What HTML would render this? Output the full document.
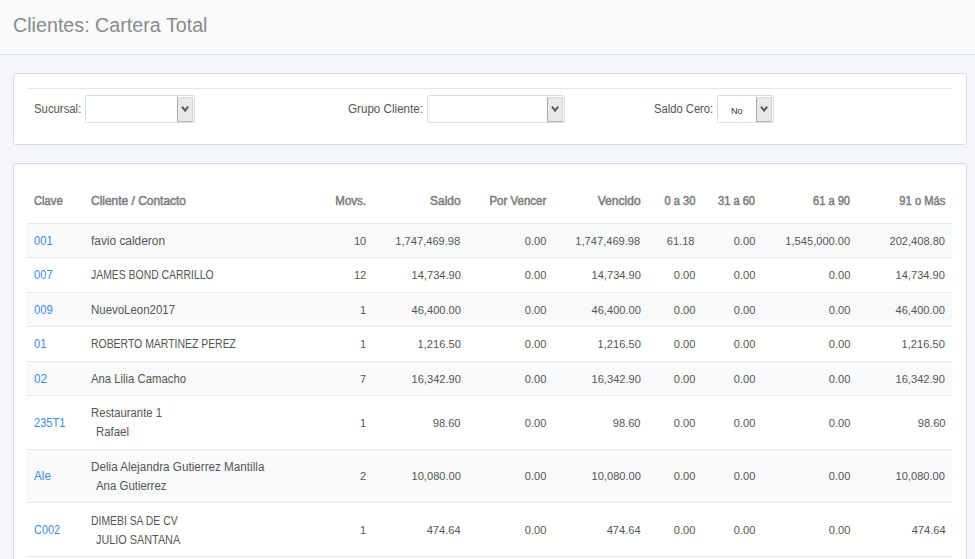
<!DOCTYPE html>
<html><head><meta charset="utf-8"><style>
html,body{margin:0;padding:0;}
body{width:975px;height:559px;overflow:hidden;position:relative;background:#f4f6f9;font-family:'Liberation Sans', sans-serif;}
.t{position:absolute;white-space:pre;}
.panel{position:absolute;background:#fff;border:1px solid #d3dde5;border-radius:3px;}
.sel{position:absolute;background:#fff;border:1px solid #d6e0e4;border-radius:2px;}
.btn{position:absolute;background:#e9e9e9;border-left:1px solid #a9a9a9;border-bottom:1px solid #b5b5b5;border-top:1px solid #dcdcdc;border-right:1px solid #d0d0d0;}
</style></head><body>
<div style="position:absolute;left:0;top:0;width:975px;height:54px;background:#f9fafc"></div>
<div style="position:absolute;left:0;top:54px;width:975px;height:1px;background:#d5dee6"></div>
<div class="panel" style="left:13px;top:73px;width:952px;height:70px"></div>
<div style="position:absolute;left:27px;top:88px;width:925px;height:1px;background:#e6e6e6"></div>
<div class="sel" style="left:85px;top:95px;width:108px;height:26px"></div><div class="btn" style="left:177px;top:97px;width:14px;height:23px"></div><svg style="position:absolute;left:179px;top:104px" width="12" height="10" viewBox="0 0 12 10"><path d="M3 2.7 L6.1 6.6 L9.2 2.7" fill="none" stroke="#585858" stroke-width="2"/></svg>
<div class="sel" style="left:427px;top:95px;width:136px;height:26px"></div><div class="btn" style="left:547px;top:97px;width:14px;height:23px"></div><svg style="position:absolute;left:549px;top:104px" width="12" height="10" viewBox="0 0 12 10"><path d="M3 2.7 L6.1 6.6 L9.2 2.7" fill="none" stroke="#585858" stroke-width="2"/></svg>
<div class="sel" style="left:717px;top:95px;width:55px;height:26px"></div><div class="btn" style="left:756px;top:97px;width:14px;height:23px"></div><svg style="position:absolute;left:758px;top:104px" width="12" height="10" viewBox="0 0 12 10"><path d="M3 2.7 L6.1 6.6 L9.2 2.7" fill="none" stroke="#585858" stroke-width="2"/></svg>
<div class="panel" style="left:13px;top:163px;width:952px;height:420px"></div>
<div style="position:absolute;left:27px;top:223px;width:925px;height:1px;background:#e8e8e8"></div>
<div style="position:absolute;left:27px;top:224px;width:925px;height:33px;background:#f9fafb"></div>
<div style="position:absolute;left:27px;top:257px;width:925px;height:1px;background:#e8e8e8"></div>
<div style="position:absolute;left:27px;top:292px;width:925px;height:1px;background:#e8e8e8"></div>
<div style="position:absolute;left:27px;top:293px;width:925px;height:33px;background:#f9fafb"></div>
<div style="position:absolute;left:27px;top:326px;width:925px;height:1px;background:#e8e8e8"></div>
<div style="position:absolute;left:27px;top:361px;width:925px;height:1px;background:#e8e8e8"></div>
<div style="position:absolute;left:27px;top:362px;width:925px;height:33px;background:#f9fafb"></div>
<div style="position:absolute;left:27px;top:395px;width:925px;height:1px;background:#e8e8e8"></div>
<div style="position:absolute;left:27px;top:449px;width:925px;height:1px;background:#e8e8e8"></div>
<div style="position:absolute;left:27px;top:450px;width:925px;height:52px;background:#f9fafb"></div>
<div style="position:absolute;left:27px;top:502px;width:925px;height:1px;background:#e8e8e8"></div>
<div style="position:absolute;left:27px;top:556px;width:925px;height:1px;background:#e8e8e8"></div>
<div class="t" style="left:13.00px;top:13.07px;font-size:20px;line-height:24px;font-weight:400;color:#8a8a8a;transform:scaleX(0.9848);transform-origin:left">Clientes: Cartera Total</div>
<div class="t" style="left:34.00px;top:101.04px;font-size:12px;line-height:16px;font-weight:400;color:#555;transform:scaleX(0.9454);transform-origin:left">Sucursal:</div>
<div class="t" style="left:348.20px;top:101.04px;font-size:12px;line-height:16px;font-weight:400;color:#555;transform:scaleX(0.9693);transform-origin:left">Grupo Cliente:</div>
<div class="t" style="left:654.30px;top:101.04px;font-size:12px;line-height:16px;font-weight:400;color:#555;transform:scaleX(0.9341);transform-origin:left">Saldo Cero:</div>
<div class="t" style="left:730.50px;top:104.16px;font-size:9.5px;line-height:13.5px;font-weight:400;color:#333;transform:scaleX(0.9625);transform-origin:left">No</div>
<div class="t" style="left:34.40px;top:192.84px;font-size:12px;line-height:16px;font-weight:400;color:#7d7d7d;-webkit-text-stroke:0.50px #7d7d7d;transform:scaleX(0.9352);transform-origin:left">Clave</div>
<div class="t" style="left:90.90px;top:192.84px;font-size:12px;line-height:16px;font-weight:400;color:#7d7d7d;-webkit-text-stroke:0.50px #7d7d7d;transform:scaleX(0.9959);transform-origin:left">Cliente / Contacto</div>
<div class="t" style="left:333.78px;top:192.84px;font-size:12px;line-height:16px;font-weight:400;color:#7d7d7d;-webkit-text-stroke:0.50px #7d7d7d;transform:scaleX(0.9589);transform-origin:right">Movs.</div>
<div class="t" style="left:429.80px;top:192.84px;font-size:12px;line-height:16px;font-weight:400;color:#7d7d7d;-webkit-text-stroke:0.50px #7d7d7d;transform:scaleX(0.9999);transform-origin:right">Saldo</div>
<div class="t" style="left:486.62px;top:192.84px;font-size:12px;line-height:16px;font-weight:400;color:#7d7d7d;-webkit-text-stroke:0.50px #7d7d7d;transform:scaleX(0.9600);transform-origin:right">Por Vencer</div>
<div class="t" style="left:597.80px;top:192.84px;font-size:12px;line-height:16px;font-weight:400;color:#7d7d7d;-webkit-text-stroke:0.50px #7d7d7d;transform:scaleX(1.0070);transform-origin:right">Vencido</div>
<div class="t" style="left:661.62px;top:192.84px;font-size:12px;line-height:16px;font-weight:400;color:#7d7d7d;-webkit-text-stroke:0.50px #7d7d7d;transform:scaleX(0.9288);transform-origin:right">0 a 30</div>
<div class="t" style="left:715.45px;top:192.84px;font-size:12px;line-height:16px;font-weight:400;color:#7d7d7d;-webkit-text-stroke:0.50px #7d7d7d;transform:scaleX(0.9239);transform-origin:right">31 a 60</div>
<div class="t" style="left:810.45px;top:192.84px;font-size:12px;line-height:16px;font-weight:400;color:#7d7d7d;-webkit-text-stroke:0.50px #7d7d7d;transform:scaleX(0.9239);transform-origin:right">61 a 90</div>
<div class="t" style="left:895.94px;top:192.84px;font-size:12px;line-height:16px;font-weight:400;color:#7d7d7d;-webkit-text-stroke:0.50px #7d7d7d;transform:scaleX(0.9319);transform-origin:right">91 o Más</div>
<div class="t" style="left:34.20px;top:232.74px;font-size:12px;line-height:16px;font-weight:400;color:#3d8be2;transform:scaleX(0.9285);transform-origin:left">001</div>
<div class="t" style="left:91.00px;top:232.74px;font-size:12px;line-height:16px;font-weight:400;color:#555;transform:scaleX(0.9904);transform-origin:left">favio calderon</div>
<div class="t" style="left:353.55px;top:233.59px;font-size:11px;line-height:15px;font-weight:400;color:#555;transform:scaleX(1.0100);transform-origin:right">10</div>
<div class="t" style="left:396.27px;top:233.59px;font-size:11px;line-height:15px;font-weight:400;color:#555;transform:scaleX(1.0100);transform-origin:right">1,747,469.98</div>
<div class="t" style="left:524.58px;top:233.59px;font-size:11px;line-height:15px;font-weight:400;color:#555;transform:scaleX(1.0100);transform-origin:right">0.00</div>
<div class="t" style="left:576.27px;top:233.59px;font-size:11px;line-height:15px;font-weight:400;color:#555;transform:scaleX(1.0100);transform-origin:right">1,747,469.98</div>
<div class="t" style="left:667.47px;top:233.59px;font-size:11px;line-height:15px;font-weight:400;color:#555;transform:scaleX(1.0100);transform-origin:right">61.18</div>
<div class="t" style="left:734.08px;top:233.59px;font-size:11px;line-height:15px;font-weight:400;color:#555;transform:scaleX(1.0100);transform-origin:right">0.00</div>
<div class="t" style="left:786.27px;top:233.59px;font-size:11px;line-height:15px;font-weight:400;color:#555;transform:scaleX(1.0100);transform-origin:right">1,545,000.00</div>
<div class="t" style="left:890.24px;top:233.59px;font-size:11px;line-height:15px;font-weight:400;color:#555;transform:scaleX(1.0100);transform-origin:right">202,408.80</div>
<div class="t" style="left:34.20px;top:267.24px;font-size:12px;line-height:16px;font-weight:400;color:#3d8be2;transform:scaleX(0.9285);transform-origin:left">007</div>
<div class="t" style="left:91.00px;top:267.24px;font-size:12px;line-height:16px;font-weight:400;color:#555;transform:scaleX(0.8679);transform-origin:left">JAMES BOND CARRILLO</div>
<div class="t" style="left:353.55px;top:268.09px;font-size:11px;line-height:15px;font-weight:400;color:#555;transform:scaleX(1.0100);transform-origin:right">12</div>
<div class="t" style="left:411.56px;top:268.09px;font-size:11px;line-height:15px;font-weight:400;color:#555;transform:scaleX(1.0100);transform-origin:right">14,734.90</div>
<div class="t" style="left:524.58px;top:268.09px;font-size:11px;line-height:15px;font-weight:400;color:#555;transform:scaleX(1.0100);transform-origin:right">0.00</div>
<div class="t" style="left:591.56px;top:268.09px;font-size:11px;line-height:15px;font-weight:400;color:#555;transform:scaleX(1.0100);transform-origin:right">14,734.90</div>
<div class="t" style="left:673.58px;top:268.09px;font-size:11px;line-height:15px;font-weight:400;color:#555;transform:scaleX(1.0100);transform-origin:right">0.00</div>
<div class="t" style="left:734.08px;top:268.09px;font-size:11px;line-height:15px;font-weight:400;color:#555;transform:scaleX(1.0100);transform-origin:right">0.00</div>
<div class="t" style="left:829.08px;top:268.09px;font-size:11px;line-height:15px;font-weight:400;color:#555;transform:scaleX(1.0100);transform-origin:right">0.00</div>
<div class="t" style="left:896.36px;top:268.09px;font-size:11px;line-height:15px;font-weight:400;color:#555;transform:scaleX(1.0100);transform-origin:right">14,734.90</div>
<div class="t" style="left:34.20px;top:301.74px;font-size:12px;line-height:16px;font-weight:400;color:#3d8be2;transform:scaleX(0.9435);transform-origin:left">009</div>
<div class="t" style="left:91.00px;top:301.74px;font-size:12px;line-height:16px;font-weight:400;color:#555;transform:scaleX(0.9537);transform-origin:left">NuevoLeon2017</div>
<div class="t" style="left:359.68px;top:302.59px;font-size:11px;line-height:15px;font-weight:400;color:#555;transform:scaleX(1.0100);transform-origin:right">1</div>
<div class="t" style="left:411.56px;top:302.59px;font-size:11px;line-height:15px;font-weight:400;color:#555;transform:scaleX(1.0100);transform-origin:right">46,400.00</div>
<div class="t" style="left:524.58px;top:302.59px;font-size:11px;line-height:15px;font-weight:400;color:#555;transform:scaleX(1.0100);transform-origin:right">0.00</div>
<div class="t" style="left:591.56px;top:302.59px;font-size:11px;line-height:15px;font-weight:400;color:#555;transform:scaleX(1.0100);transform-origin:right">46,400.00</div>
<div class="t" style="left:673.58px;top:302.59px;font-size:11px;line-height:15px;font-weight:400;color:#555;transform:scaleX(1.0100);transform-origin:right">0.00</div>
<div class="t" style="left:734.08px;top:302.59px;font-size:11px;line-height:15px;font-weight:400;color:#555;transform:scaleX(1.0100);transform-origin:right">0.00</div>
<div class="t" style="left:829.08px;top:302.59px;font-size:11px;line-height:15px;font-weight:400;color:#555;transform:scaleX(1.0100);transform-origin:right">0.00</div>
<div class="t" style="left:896.36px;top:302.59px;font-size:11px;line-height:15px;font-weight:400;color:#555;transform:scaleX(1.0100);transform-origin:right">46,400.00</div>
<div class="t" style="left:34.20px;top:336.24px;font-size:12px;line-height:16px;font-weight:400;color:#3d8be2;transform:scaleX(0.9432);transform-origin:left">01</div>
<div class="t" style="left:91.00px;top:336.24px;font-size:12px;line-height:16px;font-weight:400;color:#555;transform:scaleX(0.8698);transform-origin:left">ROBERTO MARTINEZ PEREZ</div>
<div class="t" style="left:359.68px;top:337.09px;font-size:11px;line-height:15px;font-weight:400;color:#555;transform:scaleX(1.0100);transform-origin:right">1</div>
<div class="t" style="left:417.67px;top:337.09px;font-size:11px;line-height:15px;font-weight:400;color:#555;transform:scaleX(1.0100);transform-origin:right">1,216.50</div>
<div class="t" style="left:524.58px;top:337.09px;font-size:11px;line-height:15px;font-weight:400;color:#555;transform:scaleX(1.0100);transform-origin:right">0.00</div>
<div class="t" style="left:597.67px;top:337.09px;font-size:11px;line-height:15px;font-weight:400;color:#555;transform:scaleX(1.0100);transform-origin:right">1,216.50</div>
<div class="t" style="left:673.58px;top:337.09px;font-size:11px;line-height:15px;font-weight:400;color:#555;transform:scaleX(1.0100);transform-origin:right">0.00</div>
<div class="t" style="left:734.08px;top:337.09px;font-size:11px;line-height:15px;font-weight:400;color:#555;transform:scaleX(1.0100);transform-origin:right">0.00</div>
<div class="t" style="left:829.08px;top:337.09px;font-size:11px;line-height:15px;font-weight:400;color:#555;transform:scaleX(1.0100);transform-origin:right">0.00</div>
<div class="t" style="left:902.47px;top:337.09px;font-size:11px;line-height:15px;font-weight:400;color:#555;transform:scaleX(1.0100);transform-origin:right">1,216.50</div>
<div class="t" style="left:34.20px;top:370.74px;font-size:12px;line-height:16px;font-weight:400;color:#3d8be2;transform:scaleX(0.9806);transform-origin:left">02</div>
<div class="t" style="left:91.00px;top:370.74px;font-size:12px;line-height:16px;font-weight:400;color:#555;transform:scaleX(0.9431);transform-origin:left">Ana Lilia Camacho</div>
<div class="t" style="left:359.68px;top:371.59px;font-size:11px;line-height:15px;font-weight:400;color:#555;transform:scaleX(1.0100);transform-origin:right">7</div>
<div class="t" style="left:411.56px;top:371.59px;font-size:11px;line-height:15px;font-weight:400;color:#555;transform:scaleX(1.0100);transform-origin:right">16,342.90</div>
<div class="t" style="left:524.58px;top:371.59px;font-size:11px;line-height:15px;font-weight:400;color:#555;transform:scaleX(1.0100);transform-origin:right">0.00</div>
<div class="t" style="left:591.56px;top:371.59px;font-size:11px;line-height:15px;font-weight:400;color:#555;transform:scaleX(1.0100);transform-origin:right">16,342.90</div>
<div class="t" style="left:673.58px;top:371.59px;font-size:11px;line-height:15px;font-weight:400;color:#555;transform:scaleX(1.0100);transform-origin:right">0.00</div>
<div class="t" style="left:734.08px;top:371.59px;font-size:11px;line-height:15px;font-weight:400;color:#555;transform:scaleX(1.0100);transform-origin:right">0.00</div>
<div class="t" style="left:829.08px;top:371.59px;font-size:11px;line-height:15px;font-weight:400;color:#555;transform:scaleX(1.0100);transform-origin:right">0.00</div>
<div class="t" style="left:896.36px;top:371.59px;font-size:11px;line-height:15px;font-weight:400;color:#555;transform:scaleX(1.0100);transform-origin:right">16,342.90</div>
<div class="t" style="left:34.20px;top:414.74px;font-size:12px;line-height:16px;font-weight:400;color:#3d8be2;transform:scaleX(0.9256);transform-origin:left">235T1</div>
<div class="t" style="left:91.00px;top:405.24px;font-size:12px;line-height:16px;font-weight:400;color:#555;transform:scaleX(0.9418);transform-origin:left">Restaurante 1</div>
<div class="t" style="left:95.80px;top:424.24px;font-size:12px;line-height:16px;font-weight:400;color:#555;transform:scaleX(0.9514);transform-origin:left">Rafael</div>
<div class="t" style="left:359.68px;top:415.59px;font-size:11px;line-height:15px;font-weight:400;color:#555;transform:scaleX(1.0100);transform-origin:right">1</div>
<div class="t" style="left:432.97px;top:415.59px;font-size:11px;line-height:15px;font-weight:400;color:#555;transform:scaleX(1.0100);transform-origin:right">98.60</div>
<div class="t" style="left:524.58px;top:415.59px;font-size:11px;line-height:15px;font-weight:400;color:#555;transform:scaleX(1.0100);transform-origin:right">0.00</div>
<div class="t" style="left:612.97px;top:415.59px;font-size:11px;line-height:15px;font-weight:400;color:#555;transform:scaleX(1.0100);transform-origin:right">98.60</div>
<div class="t" style="left:673.58px;top:415.59px;font-size:11px;line-height:15px;font-weight:400;color:#555;transform:scaleX(1.0100);transform-origin:right">0.00</div>
<div class="t" style="left:734.08px;top:415.59px;font-size:11px;line-height:15px;font-weight:400;color:#555;transform:scaleX(1.0100);transform-origin:right">0.00</div>
<div class="t" style="left:829.08px;top:415.59px;font-size:11px;line-height:15px;font-weight:400;color:#555;transform:scaleX(1.0100);transform-origin:right">0.00</div>
<div class="t" style="left:917.77px;top:415.59px;font-size:11px;line-height:15px;font-weight:400;color:#555;transform:scaleX(1.0100);transform-origin:right">98.60</div>
<div class="t" style="left:34.20px;top:468.24px;font-size:12px;line-height:16px;font-weight:400;color:#3d8be2;transform:scaleX(0.9744);transform-origin:left">Ale</div>
<div class="t" style="left:91.00px;top:458.74px;font-size:12px;line-height:16px;font-weight:400;color:#555;transform:scaleX(0.9736);transform-origin:left">Delia Alejandra Gutierrez Mantilla</div>
<div class="t" style="left:95.80px;top:477.74px;font-size:12px;line-height:16px;font-weight:400;color:#555;transform:scaleX(0.9521);transform-origin:left">Ana Gutierrez</div>
<div class="t" style="left:359.68px;top:469.09px;font-size:11px;line-height:15px;font-weight:400;color:#555;transform:scaleX(1.0100);transform-origin:right">2</div>
<div class="t" style="left:411.56px;top:469.09px;font-size:11px;line-height:15px;font-weight:400;color:#555;transform:scaleX(1.0100);transform-origin:right">10,080.00</div>
<div class="t" style="left:524.58px;top:469.09px;font-size:11px;line-height:15px;font-weight:400;color:#555;transform:scaleX(1.0100);transform-origin:right">0.00</div>
<div class="t" style="left:591.56px;top:469.09px;font-size:11px;line-height:15px;font-weight:400;color:#555;transform:scaleX(1.0100);transform-origin:right">10,080.00</div>
<div class="t" style="left:673.58px;top:469.09px;font-size:11px;line-height:15px;font-weight:400;color:#555;transform:scaleX(1.0100);transform-origin:right">0.00</div>
<div class="t" style="left:734.08px;top:469.09px;font-size:11px;line-height:15px;font-weight:400;color:#555;transform:scaleX(1.0100);transform-origin:right">0.00</div>
<div class="t" style="left:829.08px;top:469.09px;font-size:11px;line-height:15px;font-weight:400;color:#555;transform:scaleX(1.0100);transform-origin:right">0.00</div>
<div class="t" style="left:896.36px;top:469.09px;font-size:11px;line-height:15px;font-weight:400;color:#555;transform:scaleX(1.0100);transform-origin:right">10,080.00</div>
<div class="t" style="left:34.20px;top:521.74px;font-size:12px;line-height:16px;font-weight:400;color:#3d8be2;transform:scaleX(0.9098);transform-origin:left">C002</div>
<div class="t" style="left:91.00px;top:512.94px;font-size:12px;line-height:16px;font-weight:400;color:#555;transform:scaleX(0.8657);transform-origin:left">DIMEBI SA DE CV</div>
<div class="t" style="left:95.80px;top:531.94px;font-size:12px;line-height:16px;font-weight:400;color:#555;transform:scaleX(0.9040);transform-origin:left">JULIO SANTANA</div>
<div class="t" style="left:359.68px;top:522.59px;font-size:11px;line-height:15px;font-weight:400;color:#555;transform:scaleX(1.0100);transform-origin:right">1</div>
<div class="t" style="left:426.84px;top:522.59px;font-size:11px;line-height:15px;font-weight:400;color:#555;transform:scaleX(1.0100);transform-origin:right">474.64</div>
<div class="t" style="left:524.58px;top:522.59px;font-size:11px;line-height:15px;font-weight:400;color:#555;transform:scaleX(1.0100);transform-origin:right">0.00</div>
<div class="t" style="left:606.84px;top:522.59px;font-size:11px;line-height:15px;font-weight:400;color:#555;transform:scaleX(1.0100);transform-origin:right">474.64</div>
<div class="t" style="left:673.58px;top:522.59px;font-size:11px;line-height:15px;font-weight:400;color:#555;transform:scaleX(1.0100);transform-origin:right">0.00</div>
<div class="t" style="left:734.08px;top:522.59px;font-size:11px;line-height:15px;font-weight:400;color:#555;transform:scaleX(1.0100);transform-origin:right">0.00</div>
<div class="t" style="left:829.08px;top:522.59px;font-size:11px;line-height:15px;font-weight:400;color:#555;transform:scaleX(1.0100);transform-origin:right">0.00</div>
<div class="t" style="left:911.64px;top:522.59px;font-size:11px;line-height:15px;font-weight:400;color:#555;transform:scaleX(1.0100);transform-origin:right">474.64</div>
</body></html>
